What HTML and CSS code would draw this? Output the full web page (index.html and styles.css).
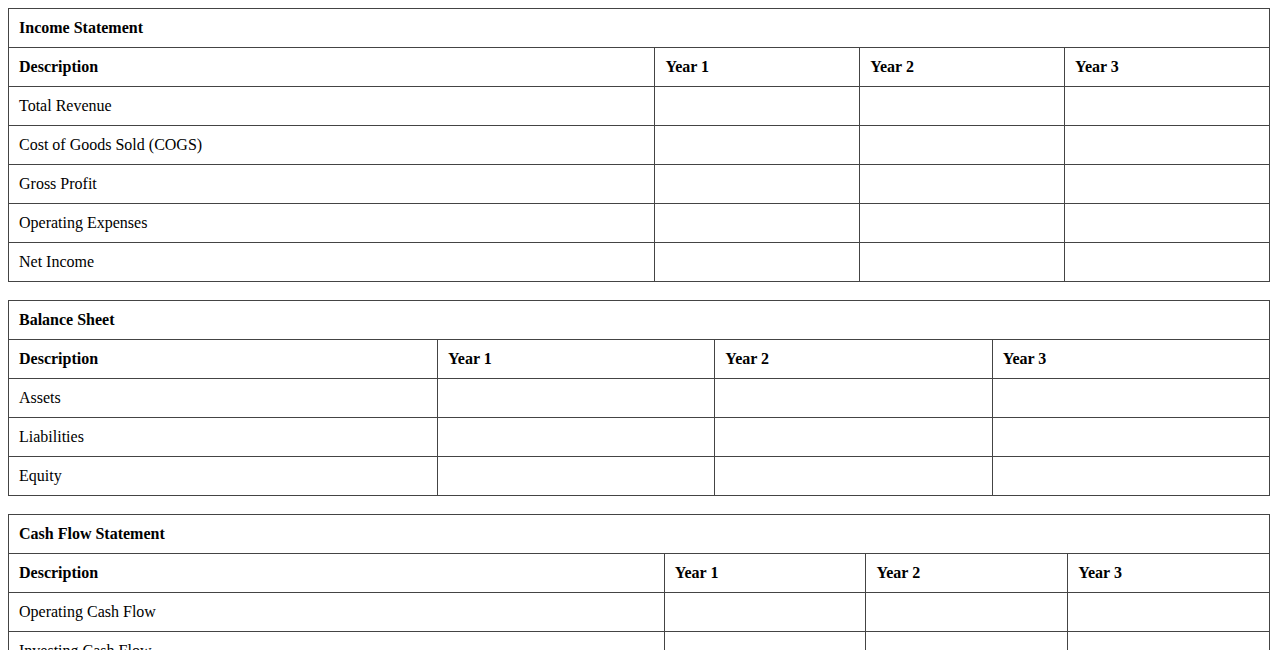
FILE: index.html
```html
<!DOCTYPE html>
<html>
<head>
<meta charset="utf-8">
<title>Financial Statements</title>
<link rel="stylesheet" href="styles.css">
</head>
<body>
<table class="fin">
  <thead>
    <tr><th colspan="4">Income Statement</th></tr>
    <tr><th>Description</th><th>Year 1</th><th>Year 2</th><th>Year 3</th></tr>
  </thead>
  <tbody>
    <tr><td>Total Revenue</td><td></td><td></td><td></td></tr>
    <tr><td>Cost of Goods Sold (COGS)</td><td></td><td></td><td></td></tr>
    <tr><td>Gross Profit</td><td></td><td></td><td></td></tr>
    <tr><td>Operating Expenses</td><td></td><td></td><td></td></tr>
    <tr><td>Net Income</td><td></td><td></td><td></td></tr>
  </tbody>
</table>
<table class="fin">
  <thead>
    <tr><th colspan="4">Balance Sheet</th></tr>
    <tr><th>Description</th><th>Year 1</th><th>Year 2</th><th>Year 3</th></tr>
  </thead>
  <tbody>
    <tr><td>Assets</td><td></td><td></td><td></td></tr>
    <tr><td>Liabilities</td><td></td><td></td><td></td></tr>
    <tr><td>Equity</td><td></td><td></td><td></td></tr>
  </tbody>
</table>
<table class="fin cash">
  <colgroup>
    <col class="col-desc">
    <col>
    <col>
    <col>
  </colgroup>
  <thead>
    <tr><th colspan="4">Cash Flow Statement</th></tr>
    <tr><th>Description</th><th>Year 1</th><th>Year 2</th><th>Year 3</th></tr>
  </thead>
  <tbody>
    <tr><td>Operating Cash Flow</td><td></td><td></td><td></td></tr>
    <tr><td>Investing Cash Flow</td><td></td><td></td><td></td></tr>
    <tr><td>Financing Cash Flow</td><td></td><td></td><td></td></tr>
    <tr><td>Net Increase/Decrease in Cash</td><td></td><td></td><td></td></tr>
  </tbody>
</table>
</body>
</html>
```
FILE: styles.css
```css
html, body {
  background: #ffffff;
}
body {
  margin: 8px;
  font-family: "Liberation Serif", "Times New Roman", serif;
  font-size: 16px;
  color: #000000;
}
.fin {
  width: 100%;
  border-collapse: collapse;
  margin-bottom: 18px;
}
.fin th,
.fin td {
  border: 1px solid #444444;
  padding: 10px;
  text-align: left;
  vertical-align: middle;
}
.fin th {
  font-weight: bold;
}
.cash .col-desc {
  width: 52%;
}
```
